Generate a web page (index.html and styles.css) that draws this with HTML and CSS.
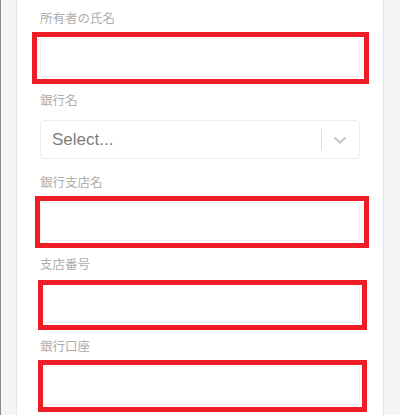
FILE: index.html
```html
<!DOCTYPE html>
<html lang="ja">
<head>
<meta charset="utf-8">
<title>口座情報</title>
<link rel="stylesheet" href="styles.css">
</head>
<body>
<div class="page">
  <form class="card">
    <div class="field">
      <label class="label">所有者の氏名</label>
      <div class="control mark mark-1"><input class="input" type="text"></div>
    </div>
    <div class="field">
      <label class="label">銀行名</label>
      <div class="control">
        <div class="select">
          <span class="placeholder">Select...</span>
          <span class="indicators">
            <span class="sep"></span>
            <svg class="chev" width="20" height="20" viewBox="0 0 20 20"><path d="M4.5 7.5 L10 12.5 L15.5 7.5" fill="none" stroke="#c8c8c8" stroke-width="2.2"/></svg>
          </span>
        </div>
      </div>
    </div>
    <div class="field">
      <label class="label">銀行支店名</label>
      <div class="control mark mark-2"><input class="input" type="text"></div>
    </div>
    <div class="field">
      <label class="label">支店番号</label>
      <div class="control mark mark-3"><input class="input" type="text"></div>
    </div>
    <div class="field">
      <label class="label">銀行口座</label>
      <div class="control mark mark-4"><input class="input" type="text"></div>
    </div>
  </form>
</div>
</body>
</html>
```
FILE: styles.css
```css
html, body {
  margin: 0;
  padding: 0;
  background: #f5f5f5;
}
.page {
  border-left: 1px solid #8c8c8c;
  height: 415px;
  overflow: hidden;
  padding-left: 16px;
  box-sizing: border-box;
}
.card {
  width: 366px;
  height: 415px;
  background: #fff;
  box-sizing: border-box;
  padding: 8px 23px 0 23px;
  box-shadow: -1px 0 0 #e6e6e6, 1px 0 0 #e4e4e4;
}
.field {
  display: flex;
  flex-direction: column;
  gap: 10px;
  margin-bottom: 13px;
}
.label {
  font-family: "Noto Sans CJK JP", "Noto Sans", sans-serif;
  font-size: 12.5px;
  line-height: 20px;
  height: 20px;
  color: #adadad;
}
.control {
  position: relative;
  width: 320px;
  height: 39px;
}
.input {
  display: block;
  width: 100%;
  height: 100%;
  box-sizing: border-box;
  border: 1px solid #eeeeee;
  border-radius: 4px;
  background: #fff;
  margin: 0;
  padding: 0 12px;
  outline: none;
}
.mark::after {
  content: "";
  position: absolute;
  border: 5px solid #ee1d26;
  pointer-events: none;
}
.mark-1::after { left: -8px; top: -6px; right: -9px; bottom: -7px; }
.mark-2::after { left: -5px; top: -6px; right: -9px; bottom: -7px; }
.mark-3::after { left: -2px; top: -4px; right: -7px; bottom: -7px; }
.mark-4::after { left: -2px; top: -6px; right: -7px; bottom: -7px; }
.select {
  display: flex;
  align-items: center;
  justify-content: space-between;
  height: 100%;
  box-sizing: border-box;
  border: 1px solid #eeeeee;
  border-radius: 4px;
  padding-left: 11px;
}
.placeholder {
  font-family: "Liberation Sans", Arial, sans-serif;
  font-size: 17px;
  color: #7d7d7d;
}
.indicators {
  display: flex;
  align-items: center;
  height: 100%;
}
.sep {
  width: 1px;
  height: 21px;
  background: #dcdcdc;
}
.chev {
  margin: 0 9px 0 8px;
}
```
